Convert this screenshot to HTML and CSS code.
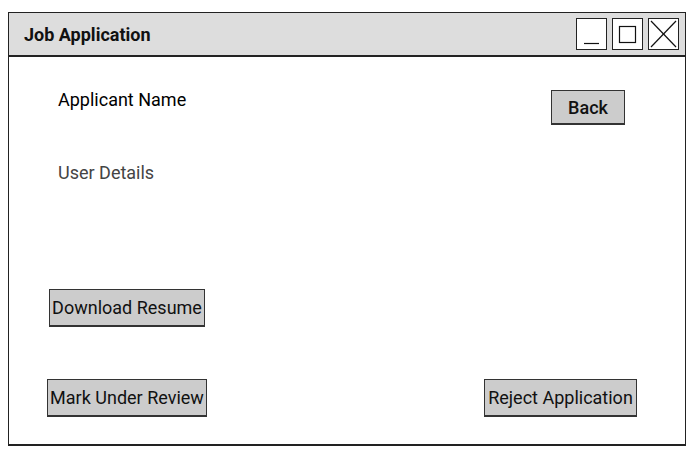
FILE: index.html
```html
<!DOCTYPE html>
<html>
<head>
<meta charset="utf-8">
<link rel="stylesheet" href="styles.css">
</head>
<body>
<div class="window">
  <div class="titlebar">
    <div class="title">Job Application</div>
    <div class="controls">
      <div class="ctl">
        <svg width="31" height="32" viewBox="0 0 31 32"><line x1="8" y1="25.5" x2="23" y2="25.5" stroke="#111" stroke-width="1.2"/></svg>
      </div>
      <div class="ctl">
        <svg width="31" height="32" viewBox="0 0 31 32"><rect x="7.5" y="8.5" width="16" height="16" fill="none" stroke="#111" stroke-width="1.2"/></svg>
      </div>
      <div class="ctl">
        <svg width="31" height="32" viewBox="0 0 31 32"><line x1="3" y1="3" x2="28" y2="29" stroke="#111" stroke-width="1.2"/><line x1="28" y1="3" x2="3" y2="29" stroke="#111" stroke-width="1.2"/></svg>
      </div>
    </div>
  </div>
  <div class="content">
    <div class="header-row">
      <div class="name">Applicant Name</div>
      <button class="btn btn-back">Back</button>
    </div>
    <div class="details">User Details</div>
    <button class="btn btn-download">Download Resume</button>
    <div class="action-row">
      <button class="btn btn-review">Mark Under Review</button>
      <button class="btn btn-reject">Reject Application</button>
    </div>
  </div>
</div>
</body>
</html>
```

FILE: styles.css
```css
html, body {
  margin: 0;
  padding: 0;
  background: #fff;
  font-family: Roboto, "Liberation Sans", sans-serif;
}

.window {
  margin: 12px 0 0 8px;
  width: 678px;
  height: 434px;
  box-sizing: border-box;
  border: 1px solid #222;
  border-bottom-width: 2px;
  display: flex;
  flex-direction: column;
}

.titlebar {
  height: 44px;
  box-sizing: border-box;
  background: #dddddd;
  border-bottom: 2px solid #222;
  display: flex;
  align-items: center;
  justify-content: space-between;
  padding: 0 6px 0 15px;
}

.title {
  font-size: 18px;
  font-weight: 700;
  color: #111;
}

.controls {
  display: flex;
  gap: 5px;
}

.ctl {
  width: 31px;
  height: 32px;
  box-sizing: border-box;
  border: 1px solid #222;
  background: #fff;
  display: flex;
}

.ctl svg {
  display: block;
  margin: -1px;
}

.content {
  flex: 1;
  display: flex;
  flex-direction: column;
  align-items: flex-start;
}

.header-row {
  align-self: stretch;
  display: flex;
  justify-content: space-between;
  align-items: flex-start;
  margin-top: 32px;
  padding: 0 60px 0 49px;
}

.name {
  font-size: 18px;
  font-weight: 400;
  line-height: 21px;
  color: #000;
}

.details {
  margin: 37px 0 0 49px;
  font-size: 18px;
  line-height: 21px;
  color: #444;
}

.btn {
  font-family: Roboto, "Liberation Sans", sans-serif;
  font-size: 18px;
  color: #111;
  background: #cccccc;
  border: 1px solid #333;
  border-bottom-width: 2px;
  box-sizing: border-box;
  padding: 0;
  height: 38px;
  white-space: nowrap;
}

.btn-back {
  margin-top: 1px;
  width: 74px;
  height: 35px;
  font-weight: 500;
}

.btn-download {
  margin: 106px 0 0 40px;
  width: 156px;
}

.action-row {
  align-self: stretch;
  display: flex;
  justify-content: space-between;
  margin-top: 52px;
  padding: 0 48px 0 38px;
}

.btn-review {
  width: 160px;
}

.btn-reject {
  width: 153px;
}
```
